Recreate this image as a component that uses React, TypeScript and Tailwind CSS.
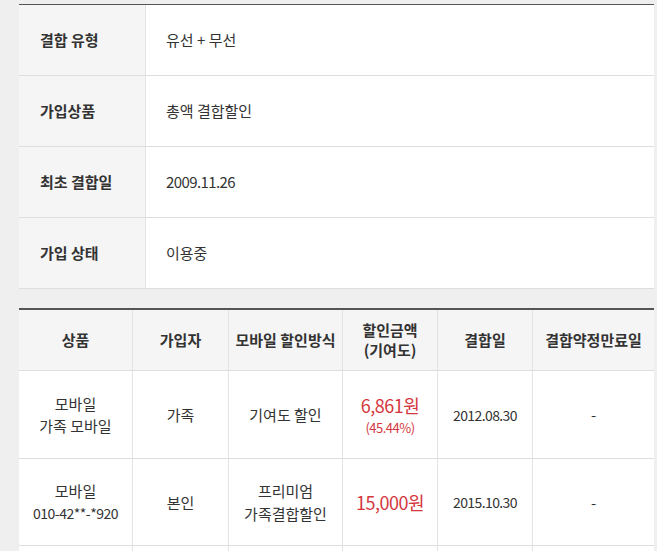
import React from "react";

const font = { fontFamily: '"Malgun Gothic", "Noto Sans CJK KR", "Noto Sans", sans-serif' };

const info: [string, string, boolean][] = [
  ["결합 유형", "유선 + 무선", false],
  ["가입상품", "총액 결합할인", false],
  ["최초 결합일", "2009.11.26", true],
  ["가입 상태", "이용중", false],
];

const col = "grid grid-cols-[114px_96px_114px_95px_95px_121px]";
const cell = "flex items-center justify-center border-r border-[#e3e3e3]";

export default function App() {
  return (
    <div className="w-[657px] h-[551px] overflow-hidden bg-[#efefef] text-[#333]" style={font}>
      <div className="ml-[19px] w-[635px] pt-[4px]">
        <div className="border-t border-[#555] bg-white">
          {info.map(([k, v, num]) => (
            <div key={k} className="flex h-[71px] border-b border-[#dedede]">
              <div className="w-[127px] shrink-0 bg-[#f5f5f5] border-r border-[#e3e3e3] flex items-center pl-[21px] text-[15px] font-bold">
                {k}
              </div>
              <div className={"flex-1 flex items-center pl-[20px] text-[15px] " + (num ? "tracking-[-0.6px] text-[14px]" : "")}>{v}</div>
            </div>
          ))}
        </div>

        <div className="mt-[19px] border-t-2 border-[#555] bg-white">
          <div className={col + " h-[61px] bg-[#f5f5f5] border-b border-[#dedede] text-[15px] font-bold text-center leading-[20px]"}>
            <div className={cell}>상품</div>
            <div className={cell}>가입자</div>
            <div className={cell}>모바일 할인방식</div>
            <div className={cell + " flex-col"}>
              <span>할인금액</span>
              <span>(기여도)</span>
            </div>
            <div className={cell}>결합일</div>
            <div className="flex items-center justify-center">결합약정만료일</div>
          </div>

          <div className={col + " h-[88px] border-b border-[#dedede] text-[15px] text-center leading-[22px]"}>
            <div className={cell + " flex-col"}>
              <span>모바일</span>
              <span>가족 모바일</span>
            </div>
            <div className={cell}>가족</div>
            <div className={cell}>기여도 할인</div>
            <div className={cell + " flex-col text-[#d4373e]"}>
              <span className="text-[18px] leading-[26px] tracking-[-0.5px]">6,861원</span>
              <span className="text-[13px] leading-[20px] tracking-[-0.5px]">(45.44%)</span>
            </div>
            <div className={cell + " text-[14px] tracking-[-0.6px]"}>2012.08.30</div>
            <div className="flex items-center justify-center">-</div>
          </div>

          <div className={col + " h-[87px] border-b border-[#dedede] text-[15px] text-center leading-[23px]"}>
            <div className={cell + " flex-col"}>
              <span>모바일</span>
              <span className="text-[14px] tracking-[-0.5px]">010-42**-*920</span>
            </div>
            <div className={cell}>본인</div>
            <div className={cell + " flex-col"}>
              <span>프리미엄</span>
              <span>가족결합할인</span>
            </div>
            <div className={cell + " text-[#d4373e] text-[18px] tracking-[-0.5px]"}>15,000원</div>
            <div className={cell + " text-[14px] tracking-[-0.6px]"}>2015.10.30</div>
            <div className="flex items-center justify-center">-</div>
          </div>
          <div className={col + " h-[40px]"}>
            <div className="border-r border-[#e3e3e3]"></div>
            <div className="border-r border-[#e3e3e3]"></div>
            <div className="border-r border-[#e3e3e3]"></div>
            <div className="border-r border-[#e3e3e3]"></div>
            <div className="border-r border-[#e3e3e3]"></div>
            <div></div>
          </div>
        </div>
      </div>
    </div>
  );
}
